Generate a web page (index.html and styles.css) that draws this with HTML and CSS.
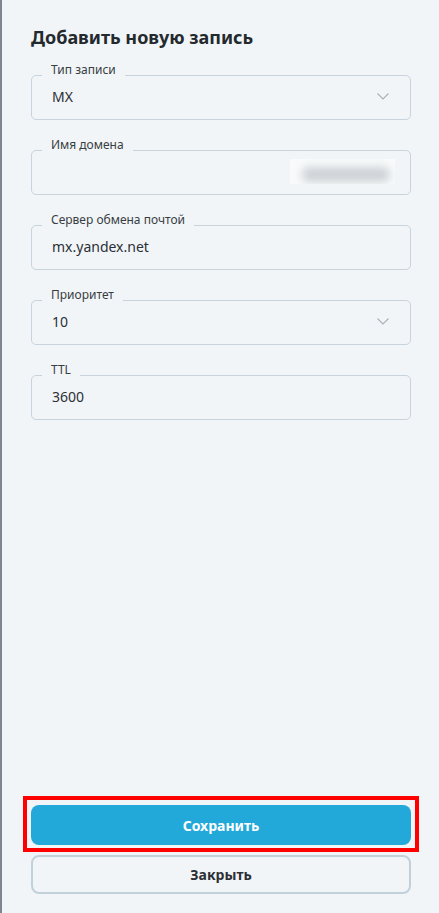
FILE: index.html
```html
<!DOCTYPE html>
<html lang="ru">
<head>
<meta charset="utf-8">
<title>Добавить новую запись</title>
<link rel="stylesheet" href="styles.css">
</head>
<body>
<div class="panel">
  <h1 class="title">Добавить новую запись</h1>
  <div class="fields">
    <div class="field">
      <span class="label">Тип записи</span>
      <span class="value">MX</span>
      <svg class="chev" width="12" height="7" viewBox="0 0 12 7"><path d="M0.5 0.5 L6 6 L11.5 0.5" fill="none" stroke="#a9b1b8" stroke-width="1.1"/></svg>
    </div>
    <div class="field">
      <span class="label">Имя домена</span>
      <span class="value"></span>
      <span class="blurbox"><span class="blurblob"></span></span>
    </div>
    <div class="field">
      <span class="label">Сервер обмена почтой</span>
      <span class="value">mx.yandex.net</span>
    </div>
    <div class="field">
      <span class="label">Приоритет</span>
      <span class="value">10</span>
      <svg class="chev" width="12" height="7" viewBox="0 0 12 7"><path d="M0.5 0.5 L6 6 L11.5 0.5" fill="none" stroke="#a9b1b8" stroke-width="1.1"/></svg>
    </div>
    <div class="field">
      <span class="label">TTL</span>
      <span class="value">3600</span>
    </div>
  </div>
  <div class="actions">
    <div class="highlight">
      <button class="btn btn-primary">Сохранить</button>
    </div>
    <button class="btn btn-secondary">Закрыть</button>
  </div>
</div>
</body>
</html>
```
FILE: styles.css
```css
html, body {
  margin: 0;
  padding: 0;
}
body {
  background: #f1f5f8;
  font-family: "Noto Sans", "Open Sans", sans-serif;
  color: #2b3035;
}
.panel {
  box-sizing: border-box;
  height: 913px;
  border-left: 2px solid #7f868d;
  padding: 0 28px 19px 29px;
  display: flex;
  flex-direction: column;
}
.title {
  margin: 25px 0 0 0;
  font-size: 18px;
  line-height: 24px;
  font-weight: 700;
  color: #24292e;
}
.fields {
  margin-top: 26px;
  display: flex;
  flex-direction: column;
  gap: 30px;
}
.field {
  position: relative;
  box-sizing: border-box;
  height: 45px;
  border: 1px solid #c7d4dd;
  border-radius: 5px;
  display: flex;
  align-items: center;
  padding: 0 20px 0 20px;
}
.label {
  position: absolute;
  left: 10px;
  top: -14px;
  padding: 0 9px 0 9px;
  background: #f1f5f8;
  font-size: 12px;
  line-height: 16px;
  color: #383d42;
}
.value {
  flex: 1;
  font-size: 14px;
  line-height: 20px;
  color: #2b3035;
  margin-top: -2px;
}
.chev {
  display: block;
  margin-right: 1px;
  margin-top: -2px;
}
.blurbox {
  width: 105px;
  height: 25px;
  margin-right: -5px;
  margin-top: -2px;
  background: #f8fafb;
  display: flex;
  align-items: center;
  justify-content: center;
  overflow: hidden;
}
.blurblob {
  display: block;
  width: 88px;
  height: 15px;
  margin-top: 5px;
  margin-left: 6px;
  border-radius: 7px;
  background: #cdd2d6;
  filter: blur(4px);
}
.actions {
  margin-top: auto;
  display: flex;
  flex-direction: column;
}
.highlight {
  margin: 0 -8px;
  padding: 5px 4px 3px 4px;
  border: 4px solid #ff0000;
}
.btn {
  box-sizing: border-box;
  width: 100%;
  font-family: "Noto Sans", "Open Sans", sans-serif;
  font-size: 14px;
  font-weight: 700;
  border-radius: 8px;
  cursor: pointer;
  display: block;
}
.btn-primary {
  height: 40px;
  border: none;
  background: #23a9d9;
  color: #ffffff;
}
.btn-secondary {
  margin-top: 3px;
  height: 39px;
  border: 2px solid #c2d0da;
  background: #f1f5f8;
  color: #2b2f33;
}
```
